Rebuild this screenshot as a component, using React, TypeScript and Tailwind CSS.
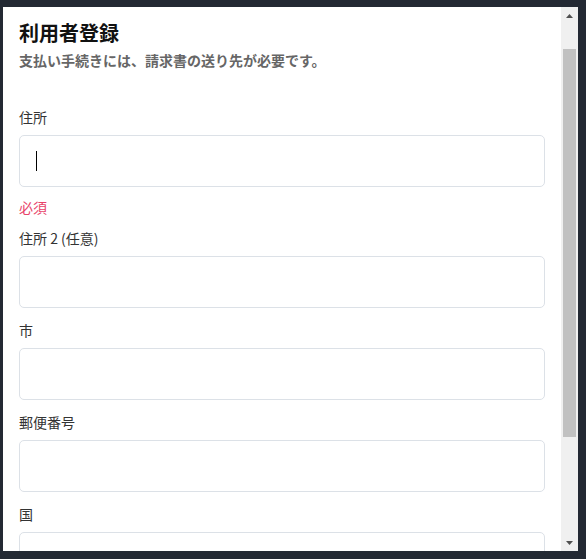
const fields = [
  { label: '住所', error: '必須', caret: true },
  { label: '住所 2 (任意)' },
  { label: '市' },
  { label: '郵便番号' },
  { label: '国' },
]

const ScrollArrow = ({ down }: { down?: boolean }) => (
  <svg width="7" height="4" viewBox="0 0 7 4" className="block">
    <path d={down ? 'M0 0H7L3.5 4Z' : 'M0 4H7L3.5 0Z'} fill="#505050" />
  </svg>
)

const Field = ({
  label,
  error,
  caret,
}: {
  label: string
  error?: string
  caret?: boolean
}) => (
  <div className="mt-[12px]">
    <div className="h-[20px] text-[14px] leading-[20px] text-[#333]">{label}</div>
    <div className="mt-[8px] flex h-[52px] items-center rounded-[5px] border border-[#dce1e7] bg-white px-[16px]">
      {caret && <span className="block h-[20px] w-px bg-black" />}
    </div>
    {error && (
      <div className="mt-[10px] h-[19px] text-[14px] leading-[20px] text-[#e8436a]">{error}</div>
    )}
  </div>
)

export default function App() {
  return (
    <div
      className="h-[559px] w-[586px] bg-[#232933] pb-[8px] pl-[3px] pr-[8px] pt-[7px]"
      style={{ fontFamily: '"Noto Sans CJK JP", sans-serif' }}
    >
      <div className="flex h-full">
        <div className="flex-1 overflow-hidden bg-white px-[16px] pt-[11px]">
          <h1 className="text-[20px] font-bold leading-[30px] text-[#111]">利用者登録</h1>
          <p className="mt-[2px] text-[14px] font-bold leading-[20px] text-[#666]">
            支払い手続きには、請求書の送り先が必要です。
          </p>
          <div className="pt-[25px]">
            {fields.map((f) => (
              <Field key={f.label} {...f} />
            ))}
          </div>
        </div>
        <div className="flex w-[17px] flex-col items-center bg-[#f0f0f0]">
          <div className="flex h-[17px] items-center justify-center">
            <ScrollArrow />
          </div>
          <div className="mt-[25px] h-[388px] w-[13px] bg-[#c1c1c1]" />
          <div className="flex-1" />
          <div className="flex h-[17px] items-center justify-center">
            <ScrollArrow down />
          </div>
        </div>
      </div>
    </div>
  )
}
